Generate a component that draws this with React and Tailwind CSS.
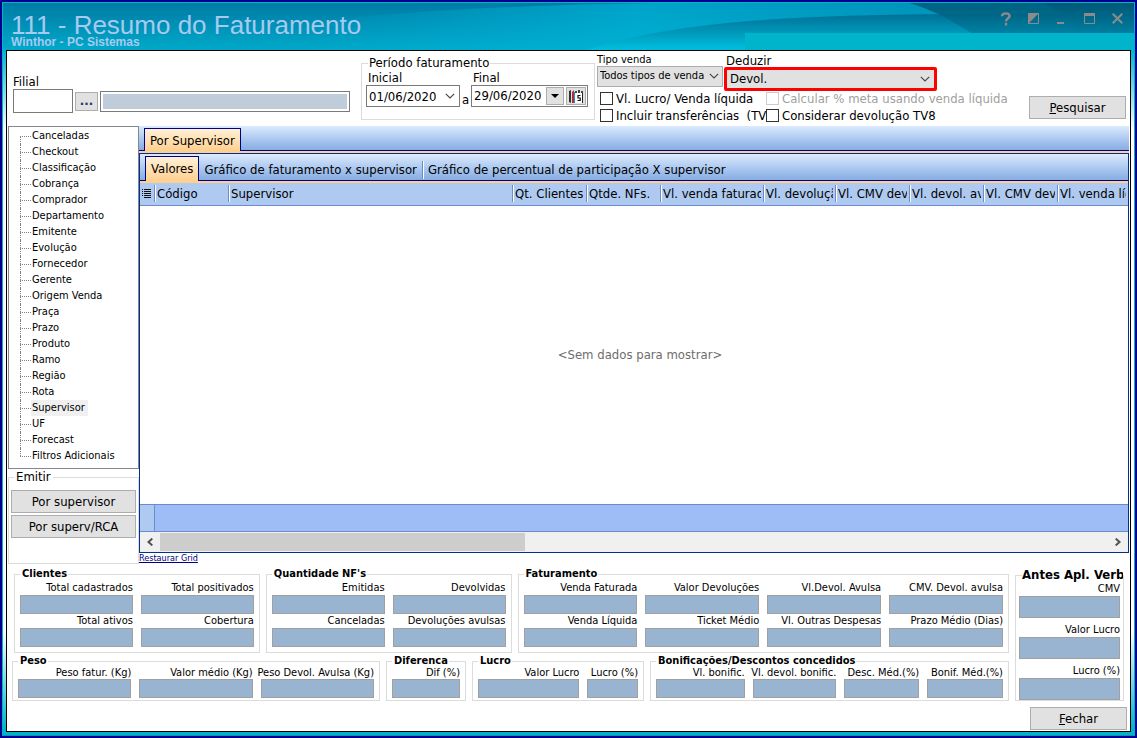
import React, { useState } from 'react';

const treeItems = [
  'Canceladas', 'Checkout', 'Classificação', 'Cobrança', 'Comprador', 'Departamento', 'Emitente',
  'Evolução', 'Fornecedor', 'Gerente', 'Origem Venda', 'Praça', 'Prazo', 'Produto', 'Ramo', 'Região',
  'Rota', 'Supervisor', 'UF', 'Forecast', 'Filtros Adicionais',
];

const columns = [
  { title: 'Código', width: 'w-[74px]' },
  { title: 'Supervisor', width: 'w-[284px]' },
  { title: 'Qt. Clientes', width: 'w-[74px]' },
  { title: 'Qtde. NFs.', width: 'w-[74px]' },
  { title: 'Vl. venda faturada', width: 'w-[103px]' },
  { title: 'Vl. devolução', width: 'w-[72px]' },
  { title: 'Vl. CMV devol.', width: 'w-[74px]' },
  { title: 'Vl. devol. avulsa', width: 'w-[74px]' },
  { title: 'Vl. CMV devol.', width: 'w-[74px]' },
  { title: 'Vl. venda líquida', width: '' },
];

const Chevron = ({ className }) => (
  <svg viewBox="0 0 10 6" className={`pointer-events-none absolute h-[6px] w-[10px] ${className}`} fill="none" stroke="#444" strokeWidth="1.1">
    <path d="M0.8 0.8 5 5 9.2 0.8" />
  </svg>
);

const Group = ({ title, className = '', children }) => (
  <fieldset className={`min-w-0 border border-[#dcdcdc] px-[5px] ${className}`}>
    <legend className="whitespace-nowrap pr-px pl-[2px] text-[11px] leading-[12px] font-bold">{title}</legend>
    {children}
  </fieldset>
);

const Field = ({ label, tight, tall }) => (
  <label className="flex min-w-0 flex-col">
    <span className={`flex justify-end whitespace-nowrap ${tight ? 'leading-[12px]' : 'leading-[14px]'}`}>{label}</span>
    <input readOnly className={`w-full min-w-0 border border-[#a0a0a0] bg-[#99b4d1] px-1 outline-none ${tall ? 'h-[22px]' : 'h-[19px]'}`} />
  </label>
);

const Check = ({ label, disabled }) => (
  <label className={`flex min-w-0 items-center gap-[3px] overflow-hidden whitespace-nowrap ${disabled ? 'text-[#a0a0a0]' : ''}`}>
    <input
      type="checkbox"
      disabled={disabled}
      className={`size-[13px] shrink-0 appearance-none border bg-white checked:bg-[#333] ${disabled ? 'border-[#ccc]' : 'border-[#333]'}`}
    />
    <span className="whitespace-pre">{label}</span>
  </label>
);

const TitleBar = () => (
  <header className="relative flex h-[47px] justify-between bg-linear-to-b from-[#007ba5] to-[#00a9c9]">
    <svg className="absolute inset-0 h-full w-full" viewBox="0 0 1131 47" preserveAspectRatio="none">
      <defs>
        <linearGradient id="glow" x1="0" x2="1" y1="0" y2="0">
          <stop offset="0" stopColor="#00b4d8" stopOpacity="0" />
          <stop offset="0.4" stopColor="#00b4d8" stopOpacity="0.7" />
          <stop offset="1" stopColor="#0090b8" stopOpacity="0.6" />
        </linearGradient>
        <linearGradient id="wave" x1="0" x2="0" y1="0" y2="1">
          <stop offset="0" stopColor="#007096" />
          <stop offset="1" stopColor="#00bfde" />
        </linearGradient>
        <linearGradient id="dark" x1="0" x2="0" y1="0" y2="1">
          <stop offset="0" stopColor="#005472" />
          <stop offset="1" stopColor="#007ea0" />
        </linearGradient>
      </defs>
      <path d="M300 47V20C400 8 520 2 650 0H1131V47Z" fill="url(#glow)" />
      <path d="M583 47C680 16 800 8 1131 12V47Z" fill="url(#wave)" />
      <path d="M907 0C935 9 952 20 970 31H1131V0Z" fill="url(#dark)" opacity="0.85" />
      <path d="M907 0C925 5 932 9 940 11C1000 11 1040 14 1064 16L1042 0Z" fill="#006585" opacity="0.5" />
      <path d="M1042 0C1058 9 1068 20 1073 31H1131V0Z" fill="url(#dark)" opacity="0.6" />
      <path d="M742 30H1131V47H742Z" fill="#00b4cc" />
    </svg>
    <div className="relative pl-2 font-['Liberation_Sans',sans-serif] text-[#a6caf0]">
      <h1 className="pt-2 text-[26px] leading-[28px]">111 - Resumo do Faturamento</h1>
      <p className="-mt-[3px] text-[12px] leading-[12px] font-bold">Winthor - PC Sistemas</p>
    </div>
    <div className="relative flex gap-[7px] pt-[5px] pr-[6px] text-[#8b8b8b]">
      <button aria-label="Ajuda" className="flex size-[21px] items-center justify-center">
        <svg viewBox="0 0 12 14" className="h-[14px] w-[12px]" fill="none" stroke="currentColor" strokeWidth="2.4">
          <path d="M2 4.2C2.2 0.6 9.6 0.4 9.6 4C9.6 6.4 6 6.2 6 9.4M6 10.8V13.4" />
        </svg>
      </button>
      <button aria-label="Alternar" className="flex size-[21px] items-center justify-center">
        <svg viewBox="0 0 11 11" className="size-[11px]" fill="none" stroke="currentColor">
          <path d="M.5.5h10v10H.5z" />
          <path d="M0 0H11L0 11Z" fill="currentColor" stroke="none" />
        </svg>
      </button>
      <button aria-label="Minimizar" className="flex size-[21px] items-center justify-center">
        <svg viewBox="0 0 11 11" className="size-[11px]" fill="currentColor"><path d="M1 9h7v2H1z" /></svg>
      </button>
      <button aria-label="Maximizar" className="flex size-[21px] items-center justify-center">
        <svg viewBox="0 0 11 11" className="size-[11px]" fill="none" stroke="currentColor">
          <path d="M.5.5h10v10H.5z" />
          <path d="M0 1.5h11" strokeWidth="3" />
        </svg>
      </button>
      <button aria-label="Fechar janela" className="flex size-[21px] items-center justify-center">
        <svg viewBox="0 0 11 11" className="size-[11px]" fill="none" stroke="currentColor" strokeWidth="2">
          <path d="M.7.7 10.3 10.3M10.3.7.7 10.3" />
        </svg>
      </button>
    </div>
  </header>
);

const Filters = () => (
  <form className="flex h-[75px] shrink-0 items-start" onSubmit={(e) => e.preventDefault()}>
    <div className="pt-6 pl-[6px]">
      <label htmlFor="filial" className="block leading-[14px]">Filial</label>
      <div className="flex items-center gap-[2px]">
        <input id="filial" className="h-6 w-[60px] border border-[#7a7a7a] px-1 outline-none" />
        <button type="button" aria-label="Buscar filial" className="h-[19px] w-[23px] border border-[#adadad] bg-[#e1e1e1] leading-[16px] font-bold text-[#123a6b]">...</button>
        <input aria-label="Nome da filial" readOnly className="h-[21px] w-[250px] border border-[#7a7a7a] bg-[#bfcddb] shadow-[inset_0_0_0_2px_#fff] outline-none" />
      </div>
    </div>

    <fieldset className="mt-[5px] ml-[11px] h-[64px] w-[234px] shrink-0 border border-[#dcdcdc] px-1">
      <legend className="ml-[2px] px-px leading-[14px]">Período faturamento</legend>
      <div className="flex items-end">
        <label className="relative block">
          <span className="block pl-[2px] leading-[15px]">Inicial</span>
          <input defaultValue="01/06/2020" className="block h-[22px] w-[94px] border border-[#7a7a7a] px-[2px] outline-none" />
          <Chevron className="right-[5px] bottom-2" />
        </label>
        <span className="w-[11px] text-center leading-[14px]">a</span>
        <div>
          <label htmlFor="final" className="block pl-[2px] leading-[15px]">Final</label>
          <div className="flex h-[22px] w-[117px] items-center gap-[2px] border border-[#7a7a7a] pr-px">
            <input id="final" defaultValue="29/06/2020" className="min-w-0 flex-1 pl-[2px] outline-none" />
            <button type="button" aria-label="Abrir lista" className="flex h-[18px] w-[18px] items-center justify-center border border-[#adadad] bg-[#e1e1e1]">
              <svg viewBox="0 0 8 4" className="h-1 w-2"><path d="M0 0H8L4 4Z" /></svg>
            </button>
            <button type="button" aria-label="Calendário" className="flex h-[18px] w-5 items-center justify-center border border-[#adadad] bg-[#e1e1e1]">
              <svg viewBox="0 0 16 15" className="h-[15px] w-4">
                <path d="M1 2 3 1V14L1 13Z" fill="#333" />
                <path d="M3 2H4V14H3Z" fill="#ddd" />
                <path d="M4 3 6 1V14H4Z" fill="#a33" />
                <path d="M6 3H7V14H6Z" fill="#38c" />
                <path d="M7 3.500H14V14H7Z" fill="#fff" />
                <path d="M14.500 2V14" stroke="#222" />
                <path d="M7 2H9V4H7ZM10 1H12V4H10ZM13 2H15V4H13Z" fill="#444" />
                <path d="M12.500 6.500H10V9H12.200V11.500H9.500" fill="none" stroke="#111" strokeWidth="1.2" />
              </svg>
            </button>
          </div>
        </div>
      </div>
    </fieldset>

    <div className="ml-[2px] w-[416px] shrink-0 pt-[3px]">
      <div className="flex items-start gap-px">
        <label className="relative block w-[126px] text-[11px]">
          <span className="block leading-[12px]">Tipo venda</span>
          <select className="block h-[21px] w-full appearance-none border border-[#adadad] bg-[#e1e1e1] pr-[17px] pl-[2px] outline-none">
            <option>Todos tipos de venda</option>
          </select>
          <Chevron className="right-1 bottom-2" />
        </label>
        <label className="relative block w-[213px]">
          <span className="block pl-[2px] leading-[13px]">Deduzir</span>
          <select className="block h-6 w-full appearance-none rounded-[2px] border-3 border-[#f00] bg-[#e1e1e1] pl-[3px] leading-[16px] outline-none">
            <option>Devol.</option>
          </select>
          <Chevron className="right-[7px] bottom-[9px]" />
        </label>
      </div>
      <div className="-mt-px grid grid-cols-[166px_auto] pl-[3px] leading-[17px]">
        <Check label="Vl. Lucro/ Venda líquida" />
        <Check label="Calcular % meta usando venda líquida" disabled />
        <Check label="Incluir transferências  (TV10)" />
        <Check label="Considerar devolução TV8" />
      </div>
    </div>

    <button type="submit" className="mt-[45px] mr-1 ml-auto h-[23px] w-[97px] shrink-0 border border-[#adadad] bg-[#e1e1e1]">
      <span className="underline">P</span>esquisar
    </button>
  </form>
);

const Sidebar = () => {
  const [selected, setSelected] = useState('Supervisor');
  return (
    <aside className="ml-px flex w-[131px] shrink-0 flex-col">
      <ul className="h-[343px] border border-[#828790] pt-px pl-[11px] text-[11px] leading-4">
        {treeItems.map((item, i) => (
          <li key={item} className="relative flex items-center">
            <span className={`absolute left-0 border-l border-dotted border-[#808080] ${i === 0 ? 'top-2 h-2' : i === treeItems.length - 1 ? 'top-0 h-2' : 'top-0 h-4'}`} />
            <span className="w-[11px] border-t border-dotted border-[#808080]" />
            <button
              onClick={() => setSelected(item)}
              className={`h-4 pr-[3px] pl-px ${selected === item ? 'bg-[#f0f0f0]' : ''}`}
            >
              {item}
            </button>
          </li>
        ))}
      </ul>
      <fieldset className="mt-px flex-1 border border-[#dcdcdc] px-[2px] pt-[6px]">
        <legend className="ml-[3px] px-[2px] leading-[14px]">Emitir</legend>
        <div className="flex flex-col gap-[2px]">
          <button className="h-[23px] border border-[#adadad] bg-[#e1e1e1]">Por supervisor</button>
          <button className="h-[23px] border border-[#adadad] bg-[#e1e1e1]">Por superv/RCA</button>
        </div>
      </fieldset>
    </aside>
  );
};

const Grid = () => (
  <table className="w-full flex-1 table-fixed border-collapse text-left">
    <colgroup>
      <col className="w-[14px]" />
      {columns.map((c, i) => <col key={i} className={c.width} />)}
    </colgroup>
    <thead className="bg-[#afcaf0]">
      <tr className="h-[22px] border-b border-[#6a8ccb]">
        <th className="p-0" aria-label="Colunas">
          <svg viewBox="0 0 9 9" className="ml-[2px] h-[9px] w-[9px]" stroke="#111">
            <path d="M0 .5h1M2 .5h7M0 2.500h1M2 2.500h7M0 4.500h1M2 4.500h7M0 6.500h1M2 6.500h7M2 8.500h7" />
          </svg>
        </th>
        {columns.map((c, i) => (
          <th key={i} className="overflow-hidden p-0 font-normal whitespace-nowrap">
            <div className="mr-[2px] overflow-hidden border-l border-[#6a8ccb] pl-[2px] leading-[17px] shadow-[inset_1px_0_0_#fff]">{c.title}</div>
          </th>
        ))}
      </tr>
    </thead>
    <tbody>
      <tr>
        <td colSpan={11} className="p-0 pl-3 text-center text-[#6d6d6d]">&lt;Sem dados para mostrar&gt;</td>
      </tr>
    </tbody>
    <tfoot className="bg-[#9ebcf5]">
      <tr className="h-[27px] border-y border-[#6a8ccb]">
        <td className="border-r border-[#6a8ccb] bg-[#afcaf0] p-0" />
        <td colSpan={10} className="p-0" />
      </tr>
    </tfoot>
  </table>
);

const Summary = () => (
  <section className="shrink-0 text-[11px]">
    <div className="flex gap-[6px] pt-1 pr-[6px] pl-[5px]">
      <div className="flex min-w-0 flex-1 flex-col gap-[2px]">
        <div className="grid grid-cols-[1fr_1fr_2fr] gap-[6px] pl-[2px]">
          <Group title="Clientes" className="pt-px pb-[5px]">
            <div className="grid grid-cols-2 gap-x-2">
              <Field label="Total cadastrados" />
              <Field label="Total positivados" />
              <Field label="Total ativos" />
              <Field label="Cobertura" />
            </div>
          </Group>
          <Group title="Quantidade NF's" className="pt-px pb-[5px]">
            <div className="grid grid-cols-2 gap-x-2">
              <Field label="Emitidas" />
              <Field label="Devolvidas" />
              <Field label="Canceladas" />
              <Field label="Devoluções avulsas" />
            </div>
          </Group>
          <Group title="Faturamento" className="pt-px pb-[5px]">
            <div className="grid grid-cols-4 gap-x-2">
              <Field label="Venda Faturada" />
              <Field label="Valor Devoluções" />
              <Field label="Vl.Devol. Avulsa" />
              <Field label="CMV. Devol. avulsa" />
              <Field label="Venda Líquida" />
              <Field label="Ticket Médio" />
              <Field label="Vl. Outras Despesas" />
              <Field label="Prazo Médio (Dias)" />
            </div>
          </Group>
        </div>
        <div className="grid grid-cols-[368fr_80fr_172fr_359fr] gap-[6px]">
          <Group title="Peso" className="pb-[2px]">
            <div className="grid grid-cols-3 gap-x-2">
              <Field tight label="Peso fatur. (Kg)" />
              <Field tight label="Valor médio (Kg)" />
              <Field tight label="Peso Devol. Avulsa (Kg)" />
            </div>
          </Group>
          <Group title="Diferenca" className="pb-[2px]">
            <Field tight label="Dif (%)" />
          </Group>
          <Group title="Lucro" className="pb-[2px]">
            <div className="grid grid-cols-[2fr_1fr] gap-x-2">
              <Field tight label="Valor Lucro" />
              <Field tight label="Lucro (%)" />
            </div>
          </Group>
          <Group title="Bonificações/Descontos concedidos" className="pb-[2px]">
            <div className="grid grid-cols-[89fr_84fr_75fr_76fr] gap-x-2">
              <Field tight label="Vl. bonific." />
              <Field tight label="Vl. devol. bonific." />
              <Field tight label="Desc. Méd.(%)" />
              <Field tight label="Bonif. Méd.(%)" />
            </div>
          </Group>
        </div>
      </div>
      <fieldset className="flex w-[109px] min-w-0 shrink-0 flex-col border border-[#dcdcdc] px-[3px]">
        <legend className="ml-[3px] w-[101px] overflow-hidden text-[13px] leading-[14px] font-bold whitespace-nowrap">Antes Apl. Verba</legend>
        <div className="flex h-full flex-col justify-between">
          <Field tall label="CMV" />
          <Field tall label="Valor Lucro" />
          <Field tall label="Lucro (%)" />
        </div>
      </fieldset>
    </div>
    <div className="flex justify-end pt-[6px] pr-[3px] pb-px">
      <button className="h-[23px] w-[97px] border border-[#adadad] bg-[#e1e1e1] text-[13px]">
        <span className="underline">F</span>echar
      </button>
    </div>
  </section>
);

const App = () => {
  return (
    <div className="flex min-h-screen flex-col border-2 border-[#000090] font-['DejaVu_Sans_Condensed','DejaVu_Sans',sans-serif] text-[13px] text-black">
      <div className="flex flex-1 flex-col border border-[#00b4c8] border-b-[#1090b8]">
        <TitleBar />
        <div className="flex flex-1 flex-col bg-[linear-gradient(#00b4cc,#fff_80px,#fff_580px,#00b4c8_680px)] px-[3px] pb-[3px]">
          <main className="flex flex-1 flex-col border border-black bg-white">
            <Filters />
            <div className="flex min-h-[438px] flex-1">
              <Sidebar />
              <section className="flex min-w-0 flex-1 flex-col pr-px">
                <nav className="flex h-[27px] shrink-0 border-b-2 border-[#ffcf8f] bg-linear-to-b from-[#dbeafd] to-[#82aae2]">
                  <span className="w-[5px] border-b border-[#000090]" />
                  <button className="mt-[2px] border border-b-0 border-[#000090] bg-linear-to-b from-[#fff1d6] to-[#ffcf8f] px-[5px] leading-[24px] whitespace-nowrap">Por Supervisor</button>
                  <span className="flex-1 border-b border-[#000090]" />
                </nav>
                <div className="flex min-h-0 flex-1 flex-col border border-[#003090]">
                  <nav className="flex h-[29px] shrink-0 border-b-2 border-[#ffcf8f] bg-linear-to-b from-[#dbeafd] to-[#82aae2]">
                    <span className="w-[5px] border-b border-[#000090]" />
                    <button className="mt-[2px] border border-b-0 border-[#000090] bg-linear-to-b from-[#fff1d6] to-[#ffcf8f] px-[5px] leading-[24px] whitespace-nowrap">Valores</button>
                    <div className="flex flex-1 items-center border-b border-[#000090] pt-[5px]">
                      <button className="px-[5px] leading-[18px] whitespace-nowrap">Gráfico de faturamento x supervisor</button>
                      <button className="border-l border-[#6a8ccb] px-[5px] leading-[18px] whitespace-nowrap shadow-[inset_1px_0_0_#fff]">Gráfico de percentual de participação X supervisor</button>
                    </div>
                  </nav>
                  <Grid />
                  <div className="flex h-5 shrink-0 items-center bg-[#f0f0f0]">
                    <button aria-label="Rolar para a esquerda" className="flex h-full w-5 items-center justify-center">
                      <svg viewBox="0 0 6 8" className="h-2 w-[6px]" fill="none" stroke="#505050" strokeWidth="2"><path d="M5.300.6 1.500 4l3.800 3.400" /></svg>
                    </button>
                    <div className="flex h-[18px] flex-1">
                      <div className="w-5/13 bg-[#cdcdcd]" />
                    </div>
                    <button aria-label="Rolar para a direita" className="flex h-full w-5 items-center justify-center">
                      <svg viewBox="0 0 6 8" className="h-2 w-[6px]" fill="none" stroke="#505050" strokeWidth="2"><path d="M.7.6 4.500 4 .7 7.400" /></svg>
                    </button>
                  </div>
                </div>
                <a href="#restaurar" className="self-start text-[9px] leading-[11px] text-[#000080] underline">Restaurar Grid</a>
              </section>
            </div>
            <Summary />
          </main>
        </div>
      </div>
    </div>
  );
};

export default App;
